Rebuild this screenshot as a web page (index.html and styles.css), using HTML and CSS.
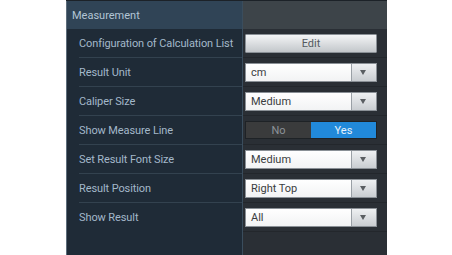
FILE: index.html
```html
<!DOCTYPE html>
<html>
<head>
<meta charset="utf-8">
<link rel="stylesheet" href="styles.css">
</head>
<body>
<div class="panel">
  <div class="row head">
    <div class="lcell">Measurement</div>
    <div class="rcell"></div>
  </div>
  <div class="row">
    <div class="lcell"><span class="label">Configuration of Calculation List</span></div>
    <div class="rcell"><button class="btn">Edit</button></div>
  </div>
  <div class="row">
    <div class="lcell"><span class="label">Result Unit</span></div>
    <div class="rcell"><div class="select"><span class="val">cm</span><span class="arrow"></span></div></div>
  </div>
  <div class="row">
    <div class="lcell"><span class="label">Caliper Size</span></div>
    <div class="rcell"><div class="select"><span class="val">Medium</span><span class="arrow"></span></div></div>
  </div>
  <div class="row">
    <div class="lcell"><span class="label">Show Measure Line</span></div>
    <div class="rcell"><div class="toggle"><span class="opt">No</span><span class="opt on">Yes</span></div></div>
  </div>
  <div class="row">
    <div class="lcell"><span class="label">Set Result Font Size</span></div>
    <div class="rcell"><div class="select"><span class="val">Medium</span><span class="arrow"></span></div></div>
  </div>
  <div class="row">
    <div class="lcell"><span class="label">Result Position</span></div>
    <div class="rcell"><div class="select"><span class="val">Right Top</span><span class="arrow"></span></div></div>
  </div>
  <div class="row last">
    <div class="lcell"><span class="label">Show Result</span></div>
    <div class="rcell"><div class="select"><span class="val">All</span><span class="arrow"></span></div></div>
  </div>
  <div class="row fill">
    <div class="lcell"></div>
    <div class="rcell"></div>
  </div>
</div>
</body>
</html>
```
FILE: styles.css
```css
html, body {
  margin: 0;
  padding: 0;
  background: #ffffff;
}
body {
  font-family: Roboto, "Liberation Sans", sans-serif;
}
.panel {
  margin-left: 66px;
  width: 321px;
  height: 255px;
  display: flex;
  flex-direction: column;
  border-top: 1px solid #1c2228;
  box-sizing: border-box;
}
.row {
  display: grid;
  grid-template-columns: 177px 144px;
  height: 29px;
}
.lcell {
  background: #1f2b37;
  border-left: 1px solid #5d6d7b;
  border-right: 1px solid #3a4d5d;
  padding-left: 12px;
  display: flex;
  align-items: stretch;
}
.rcell {
  background: #2a2f35;
  padding: 0 9px 0 2px;
  display: flex;
  align-items: center;
  border-bottom: 1px solid #23272c;
  box-sizing: border-box;
}
.label {
  flex: 1;
  display: flex;
  align-items: center;
  color: #a3b8ca;
  font-size: 11px;
  border-bottom: 1px solid #33424f;
  letter-spacing: -0.1px;
}
.row.last .label { border-bottom: none; }
.head {
  height: 28px;
}
.head .lcell {
  background: #304456;
  color: #b2c5d5;
  font-size: 11px;
  align-items: center;
  padding-left: 5px;
}
.head .rcell {
  background: #3d4449;
  border-bottom: none;
}
.fill { flex: 1; height: auto; }
.fill .rcell { border-bottom: none; }
.btn {
  width: 132px;
  height: 19px;
  margin: 0;
  padding: 0;
  border: 1px solid #8a9096;
  border-radius: 1px;
  background: linear-gradient(#f4f5f6, #d6d9dc 60%, #c3c7cb);
  color: #555a5f;
  font-family: Roboto, "Liberation Sans", sans-serif;
  font-size: 11px;
}
.select {
  width: 132px;
  height: 19px;
  display: flex;
  border: 1px solid #8a9096;
  box-sizing: border-box;
  background: #fff;
}
.val {
  flex: 1;
  display: flex;
  align-items: center;
  padding-left: 5px;
  color: #3a3d40;
  font-size: 11px;
  background: linear-gradient(#ffffff, #f2f3f4);
}
.arrow {
  width: 24px;
  border-left: 1px solid #9aa0a6;
  background: linear-gradient(#eef0f2, #c9cdd1);
  position: relative;
}
.arrow::after {
  content: "";
  position: absolute;
  left: 8px;
  top: 6px;
  border-left: 3.5px solid transparent;
  border-right: 3.5px solid transparent;
  border-top: 5px solid #5a5e62;
}
.toggle {
  width: 132px;
  height: 18px;
  display: flex;
  border: 1px solid #1e2226;
  box-sizing: border-box;
}
.opt {
  flex: 1;
  display: flex;
  align-items: center;
  justify-content: center;
  font-size: 11px;
  background: #3a3b3c;
  color: #8c9298;
}
.opt.on {
  background: #2189da;
  color: #e6f2fb;
}
```
